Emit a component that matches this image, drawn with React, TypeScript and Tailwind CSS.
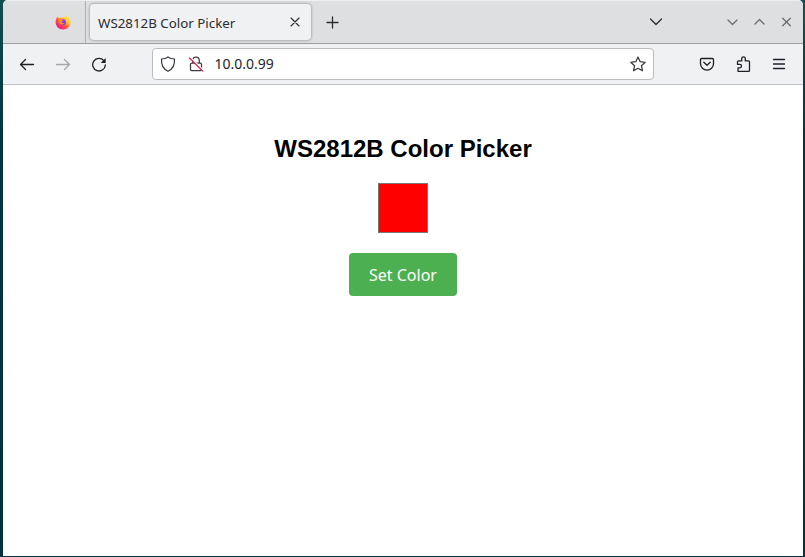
import type { ReactNode } from 'react';

type IconProps = {
  children: ReactNode;
  className?: string;
  width?: number;
};

function Icon({ children, className = '', width = 1.25 }: IconProps) {
  return (
    <svg
      viewBox="0 0 16 16"
      fill="none"
      stroke="currentColor"
      strokeWidth={width}
      strokeLinecap="round"
      strokeLinejoin="round"
      className={`block size-4 shrink-0 ${className}`}
    >
      {children}
    </svg>
  );
}

function FirefoxLogo() {
  return (
    <svg viewBox="0 0 16 16" className="block size-4 shrink-0">
      <defs>
        <linearGradient id="flame" x1="0.85" y1="0.1" x2="0.2" y2="0.9">
          <stop offset="0" stopColor="#fff04a" />
          <stop offset="0.35" stopColor="#ffc02b" />
          <stop offset="0.62" stopColor="#ff573c" />
          <stop offset="1" stopColor="#f5168c" />
        </linearGradient>
        <linearGradient id="globe" x1="0.7" y1="0" x2="0.3" y2="1">
          <stop offset="0" stopColor="#a545f4" />
          <stop offset="1" stopColor="#5441d8" />
        </linearGradient>
      </defs>
      <path
        d="M2.8 2.500c.1.8.5 1.200 1.200 1.500.8-.4 1.600-.4 2.300-.2L8 3.100c1 .1 1.800.3 2.500.8C9.900 2.700 10 1.500 10.900.6c.4 1.700 1.500 2.200 2.500 3.300l.5-.7c1.300 1.500 1.900 3.200 1.700 5.200-.3 4.200-3.400 7-7.500 7-4.200 0-7.400-3.100-7.500-7.200 0-2.100.5-4.100 2.200-5.700z"
        fill="url(#flame)"
      />
      <circle cx="8" cy="7.900" r="3" fill="url(#globe)" />
      <path d="M3.400 5.800c1.200-1 2.600-.8 3.600-.1l1.300.2c0 .7-1.300.9-1.500 1.600C6.600 8.600 8 9.300 9.200 8.900c-.6 1.700-3 2.200-4.500.8C3.900 9 3.300 7.400 3.400 5.800z" fill="#ff8a2b" />
    </svg>
  );
}

function TabStrip() {
  return (
    <div className="flex h-[44px] shrink-0 items-stretch border-b border-[#9c9ea1] border-t border-t-[#eeeff0] bg-[#dedfe1] text-[#2b2c30]">
      <div className="flex w-[83px] shrink-0 items-center border-r border-[#afb0b3] pl-[52px]">
        <FirefoxLogo />
      </div>
      <div className="mt-[3px] ml-1 flex h-[36px] w-[221px] shrink-0 items-center rounded bg-[#f0f1f3] pl-2 shadow-[0_0_3px_rgba(0,0,0,0.45)]">
        <span className="w-[189px] pt-px text-[13.33px] leading-5 whitespace-nowrap">WS2812B Color Picker</span>
        <Icon width={1.1}>
          <path d="M4 4l8 8M12 4l-8 8" />
        </Icon>
      </div>
      <div className="flex grow items-center pl-[14px]">
        <Icon width={1.3}>
          <path d="M7.500 3v11M2 8.500h11" />
        </Icon>
      </div>
      <div className="flex items-center pr-2">
        <Icon className="mr-[61px]">
          <path d="M2.500 5L8 10.500 13.500 5" />
        </Icon>
        <div className="flex items-center gap-[11px] text-[#6b6c6f]">
          <Icon>
            <path d="M3 6L7.500 10.500 12 6" />
          </Icon>
          <Icon>
            <path d="M3 10L7.500 5.500 12 10" />
          </Icon>
          <Icon>
            <path d="M3.700 4.200l7.600 7.600M11.300 4.200l-7.600 7.600" />
          </Icon>
        </div>
      </div>
    </div>
  );
}

function Toolbar() {
  return (
    <div className="flex h-[41px] shrink-0 items-center border-b border-[#c2c3c6] bg-[#f0f1f3] pl-4 text-[#1f2024]">
      <Icon width={1.3}>
        <path d="M14.500 8.500h-13M6.500 3.500l-5 5 5 5" />
      </Icon>
      <Icon className="ml-5 text-[#a6a7aa]" width={1.300}>
        <path d="M1.500 8.500h13M9.500 3.500l5 5-5 5" />
      </Icon>
      <Icon className="ml-5" width={1.300}>
        <path d="M14.300 8.900a6.300 6.300 0 1 1-1.500-4.300" />
        <path d="M14.700 2v5H9.700z" fill="currentColor" stroke="none" />
      </Icon>
      <div className="ml-[45px] flex h-8 w-[502px] shrink-0 items-center rounded border border-[#bbbcbf] bg-white px-[7px] text-[#3a3b40]">
        <Icon>
          <path d="M8 .9c1.500 1.100 3.900 2 6.500 2.100C14.900 9 12.900 13 8 15.300 3.100 13 1.100 9 1.500 3 4.100 2.900 6.500 2 8 .9z" />
        </Icon>
        <Icon className="ml-3">
          <path d="M4.700 7V4.400a3.300 3.300 0 0 1 6.600 0V7M3.800 7h8.400c.8 0 1.300.5 1.300 1.300v5c0 .8-.5 1.300-1.300 1.300H3.800c-.8 0-1.300-.5-1.300-1.300v-5C2.500 7.500 3 7 3.800 7z" />
          <path d="M2.500 1.500l12.500 12.500" stroke="#fff" strokeWidth="1.500" />
          <path d="M1.500 2l13 13" stroke="#e8204e" strokeWidth="1.300" />
        </Icon>
        <span className="ml-[10.5px] grow text-[14px] leading-5 text-[#24252b]">10.0.0.99</span>
        <Icon className="ml-px">
          <path d="M8 1l2.150 4.700 5.100.6-3.800 3.450 1.050 5.050L8 12.300l-4.500 2.500 1.050-5.050L.75 6.300l5.100-.6z" />
        </Icon>
      </div>
      <div className="flex items-center pl-[45px]">
        <Icon width={1.300}>
          <path d="M2.700 2.500h10.600c.8 0 1.200.4 1.200 1.200v4a6.500 6.500 0 0 1-13 0v-4c0-.8.400-1.200 1.200-1.200zM4.800 6.300L8 9.300l3.200-3" />
        </Icon>
        <Icon className="ml-5" width={1.300}>
          <path d="M3 15.300v-3.500h1.800a1.700 1.700 0 0 0 0-3.400H2.500V5.800c0-.6.300-.9.900-.9h3.300V2.600a1.800 1.800 0 0 1 3.600 0v2.300h3.300c.6 0 .9.300.9.900v8.600c0 .6-.3.900-.9.900z" />
        </Icon>
        <Icon className="ml-5" width={1.300}>
          <path d="M2.500 3.500h11M2.500 8h11M2.500 12.500h11" />
        </Icon>
      </div>
    </div>
  );
}

export default function App() {
  return (
    <div className="h-[557px] w-[805px] bg-[linear-gradient(#124e52,#003543_25%,#00333f)] pr-[2px] pb-px pl-[3px] font-['Noto_Sans',sans-serif]">
      <div className="flex h-full w-full flex-col overflow-hidden rounded-t-[5px] bg-white">
        <TabStrip />
        <Toolbar />
        <main className="flex grow flex-col items-center pt-[50px]">
          <h1 className="font-['Liberation_Sans',Arial,sans-serif] text-2xl leading-7 font-bold text-black">
            WS2812B Color Picker
          </h1>
          <div className="mt-5 size-[50px] border border-[#777] bg-[#f00]" />
          <button className="mt-5 h-[43px] w-[108px] rounded bg-[#4caf50] text-base text-white">Set Color</button>
        </main>
      </div>
    </div>
  );
}
